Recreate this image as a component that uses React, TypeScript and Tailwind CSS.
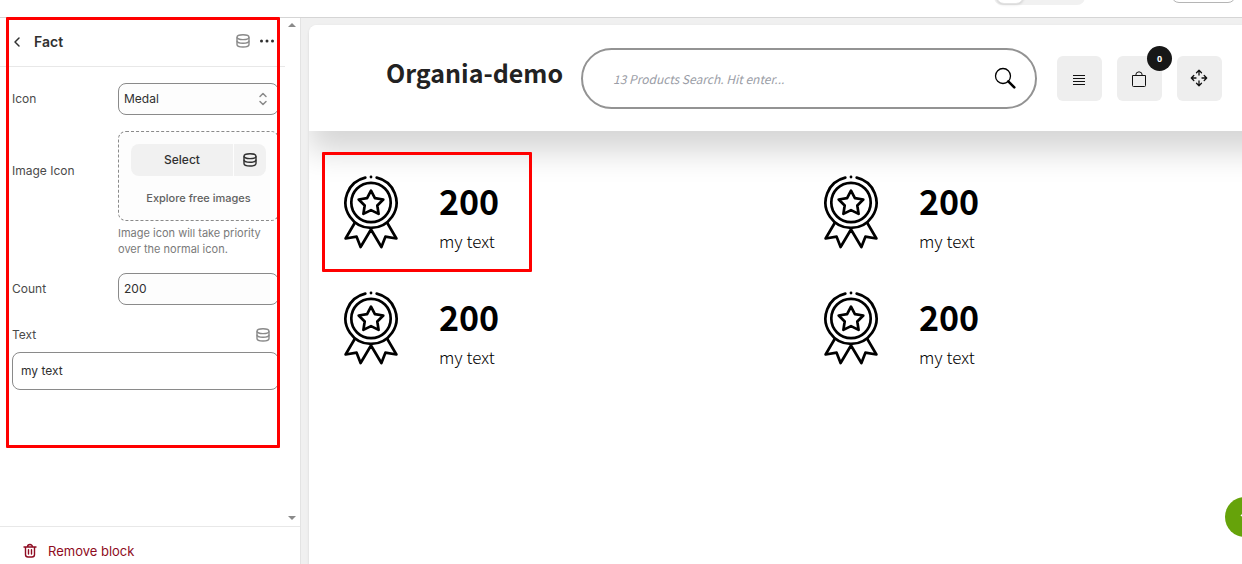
import * as React from "react";
import clsx from "clsx";

const facts = [
  { id: 1, count: "200", text: "my text", highlighted: true },
  { id: 2, count: "200", text: "my text" },
  { id: 3, count: "200", text: "my text" },
  { id: 4, count: "200", text: "my text" },
];

function DatabaseIcon({ className }: { className?: string }) {
  return (
    <svg
      viewBox="0 0 16 16"
      fill="none"
      stroke="currentColor"
      strokeWidth="1.4"
      className={clsx("size-4", className)}
      aria-hidden="true"
    >
      <ellipse cx="8" cy="4.2" rx="6" ry="2.4" />
      <path d="M2 4.2v7.3c0 1.5 2.5 2.5 6 2.5s6-1 6-2.5V4.2" />
      <path d="M2 7.8c0 1.5 2.5 2.5 6 2.5s6-1 6-2.5" />
    </svg>
  );
}

function MedalIcon() {
  return (
    <svg
      viewBox="0 0 56 76"
      fill="none"
      stroke="currentColor"
      strokeWidth="2.7"
      strokeLinecap="round"
      strokeLinejoin="round"
      className="h-19 w-14 shrink-0"
      aria-hidden="true"
    >
      <path d="M22.3 2.6A25.5 25.5 0 1 0 33.7 2.6" />
      <circle cx="28" cy="27.5" r="19.7" />
      <circle cx="28" cy="2" r="1.4" fill="currentColor" stroke="none" />
      <path d="M28 15.7l3.9 7.5 8.4 1.3-6 6 1.3 8.4-7.6-3.8-7.6 3.8 1.3-8.4-6-6 8.4-1.3z" />
      <path d="M11.7 48L2.6 63.5l11-1.8L17.6 72 28 54.5 38.4 72l4-10.3 11 1.8L44.3 48" />
    </svg>
  );
}

function SearchIcon() {
  return (
    <svg viewBox="0 0 22 22" fill="none" stroke="currentColor" className="size-[22px]" aria-hidden="true">
      <circle cx="9" cy="9" r="7.5" strokeWidth="1.3" />
      <path d="M14.3 14.3l6 6" strokeWidth="2.6" strokeLinecap="round" />
    </svg>
  );
}

function ListIcon() {
  return (
    <svg viewBox="0 0 15 15" fill="currentColor" className="size-[15px]" aria-hidden="true">
      <path d="M1 3h12v1H1zM1 6h12v1H1zM1 9h12v1H1zM1 12h12v1H1z" />
    </svg>
  );
}

function BagIcon() {
  return (
    <svg viewBox="0 0 17 17" fill="none" stroke="currentColor" className="size-[17px]" aria-hidden="true">
      <path d="M1.5 4.5h13v10a1 1 0 0 1-1 1h-11a1 1 0 0 1-1-1z" />
      <path d="M4.7 4.5a3.3 3.7 0 0 1 6.6 0" />
    </svg>
  );
}

function MoveIcon() {
  return (
    <svg
      viewBox="0 0 18 18"
      fill="none"
      stroke="currentColor"
      strokeWidth="1.3"
      strokeLinecap="round"
      strokeLinejoin="round"
      className="size-[18px]"
      aria-hidden="true"
    >
      <path d="M9 6V1.5M6.5 3.8L9 1.3l2.5 2.5" />
      <path d="M9 12v4.5M6.5 14.2L9 16.7l2.5-2.5" />
      <path d="M6 9H1.5M3.8 6.5L1.3 9l2.5 2.5" />
      <path d="M12 9h4.5M14.2 6.5L16.7 9l-2.5 2.5" />
    </svg>
  );
}

function TopBar() {
  return (
    <div className="relative z-10 flex h-[17px] shrink-0 items-start justify-end gap-[86px] overflow-hidden bg-white pr-1.5">
      <div className="-mt-[27px] flex h-8 w-[91px] rounded-lg bg-[#f1f1f1] px-0.5">
        <button
          type="button"
          aria-label="Desktop view"
          className="h-[31px] w-7 rounded-lg border border-[#e3e3e3] bg-white shadow-sm"
        />
      </div>
      <button
        type="button"
        aria-label="Save"
        className="-mt-7 h-[31px] w-[65px] rounded-lg border border-[#b5b5b5] bg-white"
      />
    </div>
  );
}

function Sidebar() {
  const [icon, setIcon] = React.useState("medal");
  const [count, setCount] = React.useState("200");
  const [text, setText] = React.useState("my text");

  return (
    <aside className="relative flex w-[301px] shrink-0 flex-col border-r border-[#e3e3e3] bg-white text-xs text-[#4a4a4a]">
      <div className="mr-[15px] flex h-[49px] items-center border-b border-[#e8e8e8] pr-2.5 pl-3">
        <button type="button" aria-label="Back" className="text-[#303030]">
          <svg viewBox="0 0 10 12" fill="none" stroke="currentColor" strokeWidth="1.5" strokeLinecap="round" strokeLinejoin="round" className="h-3 w-2.5">
            <path d="M7 2L3 6l4 4" />
          </svg>
        </button>
        <h2 className="ml-3 flex-1 text-sm font-semibold text-[#303030]">Fact</h2>
        <div className="flex gap-2 pb-0.5">
          <button type="button" aria-label="Connect data source" className="text-[#8a8a8a]">
            <DatabaseIcon />
          </button>
          <button type="button" aria-label="More actions" className="text-[#303030]">
            <svg viewBox="0 0 16 16" fill="currentColor" className="size-4">
              <circle cx="2.5" cy="8" r="1.5" />
              <circle cx="8" cy="8" r="1.5" />
              <circle cx="13.5" cy="8" r="1.5" />
            </svg>
          </button>
        </div>
      </div>

      <div className="flex-1 pt-4 pr-[21px] pl-3">
        <div className="grid grid-cols-[106px_1fr] gap-y-4">
          <label htmlFor="icon" className="leading-8">
            Icon
          </label>
          <div className="relative">
            <select
              id="icon"
              value={icon}
              onChange={(event) => setIcon(event.target.value)}
              className="h-8 w-full appearance-none rounded-lg border border-[#8a8a8a] bg-[#fdfdfd] px-[5px] text-[#303030]"
            >
              <option value="medal">Medal</option>
            </select>
            <svg viewBox="0 0 10 16" fill="none" stroke="#8a8a8a" strokeWidth="1.5" strokeLinecap="round" strokeLinejoin="round" className="pointer-events-none absolute top-2 right-[11px] h-4 w-2.5">
              <path d="M2 5.5l3-3 3 3M2 10.5l3 3 3-3" />
            </svg>
          </div>

          <span id="image-icon" className="pt-[30px] leading-5">
            Image Icon
          </span>
          <div role="group" aria-labelledby="image-icon">
            <div className="flex h-[90px] flex-col items-center rounded-lg border border-dashed border-[#8a8a8a] bg-[#fdfdfd] p-3">
              <div className="flex h-8 w-full gap-px font-medium text-[#303030]">
                <button type="button" className="flex-1 rounded-l-lg bg-[#f1f1f1]">
                  Select
                </button>
                <button type="button" aria-label="Connect image source" className="flex w-8 items-center justify-center rounded-r-lg bg-[#f1f1f1]">
                  <DatabaseIcon />
                </button>
              </div>
              <button type="button" className="mt-3.5 text-[11px] leading-4 font-medium text-[#616161]">
                Explore free images
              </button>
            </div>
            <p className="mt-1 text-[11px] leading-4 text-[#7a7a7a]">
              Image icon will take priority over the normal icon.
            </p>
          </div>

          <label htmlFor="count" className="leading-8">
            Count
          </label>
          <input
            id="count"
            value={count}
            onChange={(event) => setCount(event.target.value)}
            className="h-8 w-full min-w-0 rounded-lg border border-[#8a8a8a] bg-[#fdfdfd] px-[5px] pb-0.5 text-[#303030]"
          />
        </div>

        <div className="mt-5 flex items-center justify-between pr-2">
          <label htmlFor="text" className="leading-5">
            Text
          </label>
          <button type="button" aria-label="Connect text source" className="text-[#8a8a8a]">
            <DatabaseIcon />
          </button>
        </div>
        <input
          id="text"
          value={text}
          onChange={(event) => setText(event.target.value)}
          className="mt-[7px] h-[38px] w-full rounded-lg border border-[#8a8a8a] bg-white px-2 pb-0.5 text-[#303030]"
        />
      </div>

      <div className="flex h-[38px] shrink-0 items-center border-t border-[#e8e8e8] pt-3 pl-[22px]">
        <button type="button" className="flex items-center gap-2.5 text-[13px] text-[#8e0b21]">
          <svg viewBox="0 0 16 16" fill="none" stroke="currentColor" strokeWidth="1.4" strokeLinecap="round" className="size-4">
            <path d="M2 4h12M5.5 4a2.5 2.5 0 0 1 5 0M3.5 4v7.5a2.5 2.5 0 0 0 2.5 2.5h4a2.5 2.5 0 0 0 2.5-2.5V4M6.5 6.8v4.2M9.5 6.8v4.2" />
          </svg>
          Remove block
        </button>
      </div>

      {/* scrollbar arrows */}
      <span className="absolute top-[5px] right-1 border-x-4 border-b-4 border-x-transparent border-b-[#8a8a8a]" />
      <span className="absolute right-1 bottom-11 border-x-4 border-t-4 border-x-transparent border-t-[#8a8a8a]" />

      <div className="pointer-events-none absolute -top-px left-1.5 h-[431px] w-[274px] rounded-[1px] border-3 border-[#ff0000]" />
    </aside>
  );
}

function StoreHeader() {
  return (
    <header className="relative -mr-[61px] flex h-[106px] items-center bg-white pr-[81px] pl-[77px] shadow-[0_20px_30px_rgba(0,0,0,0.17)]">
      <a
        href="#home"
        className="mr-[18px] pb-3 font-['Noto_Sans_CJK_SC',sans-serif] text-[25px] leading-10 font-bold text-[#222]"
      >
        Organia-demo
      </a>
      <form
        onSubmit={(event) => event.preventDefault()}
        className="mr-5 flex h-[61px] min-w-0 flex-1 items-center rounded-full border-2 border-[#939393] pr-[19px] pl-[30px]"
      >
        <input
          type="search"
          aria-label="Search products"
          placeholder="13 Products Search. Hit enter..."
          className="min-w-0 flex-1 pt-0.5 font-['Noto_Sans_CJK_SC',sans-serif] text-xs italic outline-none placeholder:text-[#9a9da6]"
        />
        <button type="submit" aria-label="Search" className="text-black">
          <SearchIcon />
        </button>
      </form>
      <div className="flex gap-[15px] text-[#111]">
        <button type="button" aria-label="Menu" className="flex size-[45px] items-center justify-center rounded-md bg-[#eee] pt-0.5">
          <ListIcon />
        </button>
        <button type="button" aria-label="Cart" className="relative flex size-[45px] items-center justify-center rounded-md bg-[#eee] pt-0.5">
          <BagIcon />
          <span className="absolute -top-2.5 -right-2.5 flex size-[25px] items-center justify-center rounded-full bg-[#171717] pt-0.5 font-['Open_Sans',sans-serif] text-[9px] font-bold text-white">
            0
          </span>
        </button>
        <button type="button" aria-label="Move" className="flex size-[45px] items-center justify-center rounded-md bg-[#eee] pr-0.5">
          <MoveIcon />
        </button>
      </div>
    </header>
  );
}

export default function App() {
  return (
    <div className="flex h-screen flex-col overflow-hidden bg-white font-['Inter',sans-serif]">
      <TopBar />
      <div className="flex min-h-0 flex-1 border-t border-[#d5d5d5] bg-[#f0f0f0]">
        <Sidebar />
        <main className="relative mt-[7px] ml-2 min-w-0 flex-1 overflow-hidden rounded-tl-lg bg-white shadow-sm">
          <StoreHeader />
          <section className="relative -mr-[61px] grid grid-cols-2 gap-y-10 pt-[44px] pl-[34px]">
            {facts.map((fact) => (
              <article key={fact.id} className="relative flex h-19 gap-10 text-black">
                <MedalIcon />
                <div className="font-['Noto_Sans_CJK_SC',sans-serif]">
                  <h3 className="pt-1.5 text-[34px] leading-10 font-bold">{fact.count}</h3>
                  <p className="pt-1.5 text-[17px] leading-7 font-light">{fact.text}</p>
                </div>
                {fact.highlighted && (
                  <div className="pointer-events-none absolute -top-[23px] -left-[21px] h-[120px] w-[210px] rounded-[1px] border-3 border-[#ff0000]" />
                )}
              </article>
            ))}
          </section>
          <button
            type="button"
            aria-label="Back to top"
            className="absolute -right-[23px] bottom-[27px] flex size-10 items-center justify-center rounded-full bg-[#66a30a] text-white"
          >
            <svg viewBox="0 0 16 16" fill="none" stroke="currentColor" strokeWidth="1.5" className="size-4">
              <path d="M4 7l4-4 4 4M8 3v10" />
            </svg>
          </button>
        </main>
      </div>
    </div>
  );
}
